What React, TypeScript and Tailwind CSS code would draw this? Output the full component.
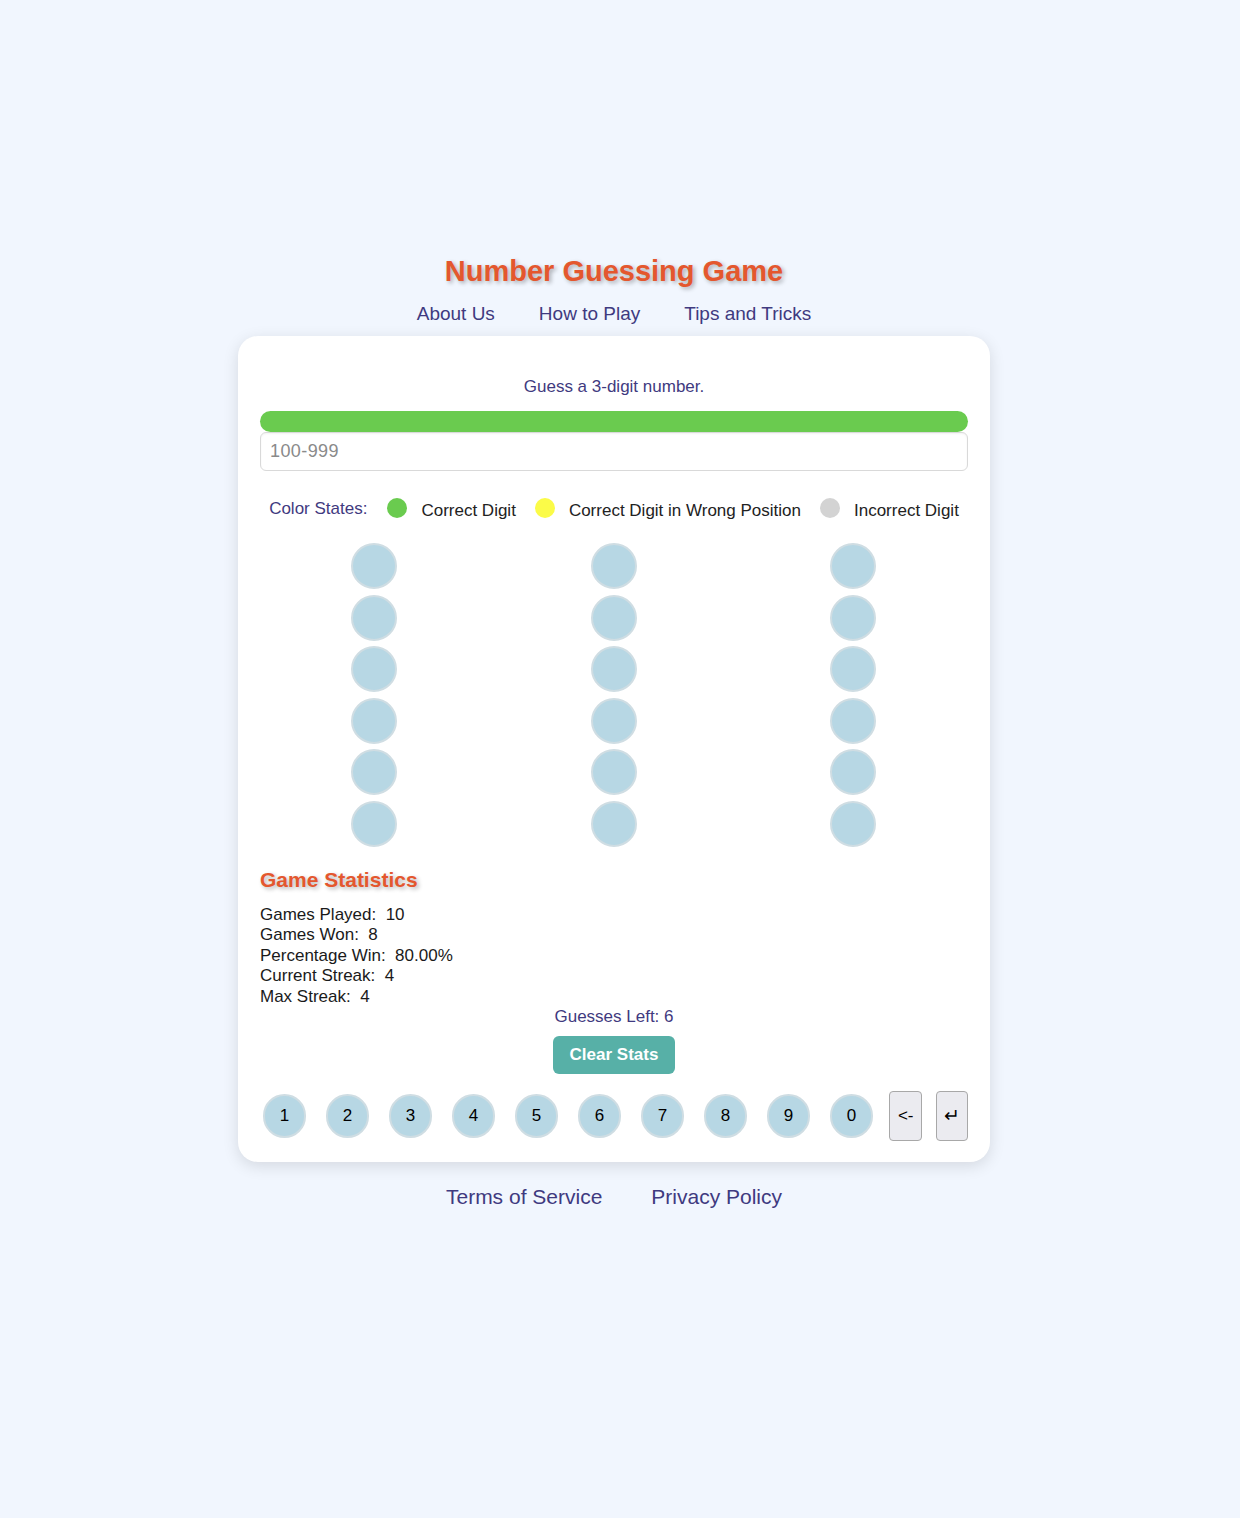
import React from "react";

const font = { fontFamily: '"Liberation Sans", Arial, sans-serif' };

export default function App() {
  const rows = [0, 1, 2, 3, 4, 5];
  const cols = [0, 1, 2];
  const keys = ["1", "2", "3", "4", "5", "6", "7", "8", "9", "0"];
  return (
    <div className="min-h-[1518px] w-full bg-[#f1f6fe] flex flex-col items-center pt-[254px] pr-[12px]" style={font}>
      <h1 className="text-[29px] leading-[34px] font-bold text-[#e4572e] [text-shadow:2px_2px_4px_rgba(0,0,0,0.3)]">
        Number Guessing Game
      </h1>
      <nav className="flex gap-[44px] mt-[15px] text-[19px] leading-[22px] text-[#3f3a80]">
        <a>About Us</a>
        <a>How to Play</a>
        <a>Tips and Tricks</a>
      </nav>
      <div className="mt-[11px] w-[752px] bg-white rounded-[20px] shadow-[0_4px_16px_rgba(0,0,0,0.12)] px-[22px] pt-[41px] pb-[21px] flex flex-col">
        <p className="text-center text-[17px] leading-[20px] text-[#3f3a80]">Guess a 3-digit number.</p>
        <div className="mt-[14px] h-[21px] rounded-full bg-[#6acb4f]" />
        <div className="h-[39px] border border-[#d9d9d9] rounded-[6px] flex items-center px-[9px] text-[18px] tracking-[0.4px] text-[#8a8a8a] shadow-[inset_0_1px_2px_rgba(0,0,0,0.05)]">
          100-999
        </div>
        <div className="mt-[28px] flex items-center justify-center text-[17px] leading-[20px]">
          <span className="text-[#3f3a80] mr-[20px] -mt-[2px]">Color States:</span>
          <span className="w-[20px] h-[20px] rounded-full bg-[#6acb4f] -mt-[4px]" />
          <span className="ml-[14px] mr-[19px] text-[#222] mt-[2px]">Correct Digit</span>
          <span className="w-[20px] h-[20px] rounded-full bg-[#fbfb48] -mt-[4px]" />
          <span className="ml-[14px] mr-[19px] text-[#222] mt-[2px]">Correct Digit in Wrong Position</span>
          <span className="w-[20px] h-[20px] rounded-full bg-[#d3d3d3] -mt-[4px]" />
          <span className="ml-[14px] text-[#222] mt-[2px]">Incorrect Digit</span>
        </div>
        <div className="mt-[22px] flex flex-col gap-[5.5px] pl-[91px]">
          {rows.map((r) => (
            <div key={r} className="flex gap-[193.5px]">
              {cols.map((c) => (
                <div key={c} className="w-[46px] h-[46px] rounded-full bg-[#b7d7e4] border-2 border-[#cfdde3]" />
              ))}
            </div>
          ))}
        </div>
        <h2 className="mt-[20px] text-[21px] leading-[26px] font-bold text-[#e4572e] [text-shadow:2px_2px_4px_rgba(0,0,0,0.3)]">
          Game Statistics
        </h2>
        <div className="mt-[12px] text-[17px] leading-[20.5px] text-[#1a1a1a] whitespace-pre">
          <div>Games Played:  10</div>
          <div>Games Won:  8</div>
          <div>Percentage Win:  80.00%</div>
          <div>Current Streak:  4</div>
          <div>Max Streak:  4</div>
        </div>
        <p className="text-center text-[17px] leading-[20px] text-[#3f3a80]">Guesses Left: 6</p>
        <div className="flex justify-center mt-[9px]">
          <button className="w-[122px] h-[38px] rounded-[6px] bg-[#57b0a7] text-white font-bold text-[17px]">
            Clear Stats
          </button>
        </div>
        <div className="mt-[17px] flex items-center">
          <div className="flex gap-[20px] pl-[3px]">
            {keys.map((k) => (
              <div
                key={k}
                className="w-[43px] h-[44px] rounded-full bg-[#b7d7e4] border-2 border-[#cfdde3] flex items-center justify-center text-[17px] text-black"
              >
                {k}
              </div>
            ))}
          </div>
          <div className="ml-[16px] w-[34px] h-[50px] rounded-[4px] bg-[#ebebf0] border border-[#a8a8a8] flex items-center justify-center text-[17px] text-black">
            &lt;-
          </div>
          <div className="ml-[14px] w-[32px] h-[50px] rounded-[4px] bg-[#ebebf0] border border-[#a8a8a8] flex items-center justify-center text-[19px] text-black">
            ↵
          </div>
        </div>
      </div>
      <footer className="mt-[22px] flex gap-[49px] text-[21px] leading-[26px] text-[#3f3a80]">
        <a>Terms of Service</a>
        <a>Privacy Policy</a>
      </footer>
    </div>
  );
}
